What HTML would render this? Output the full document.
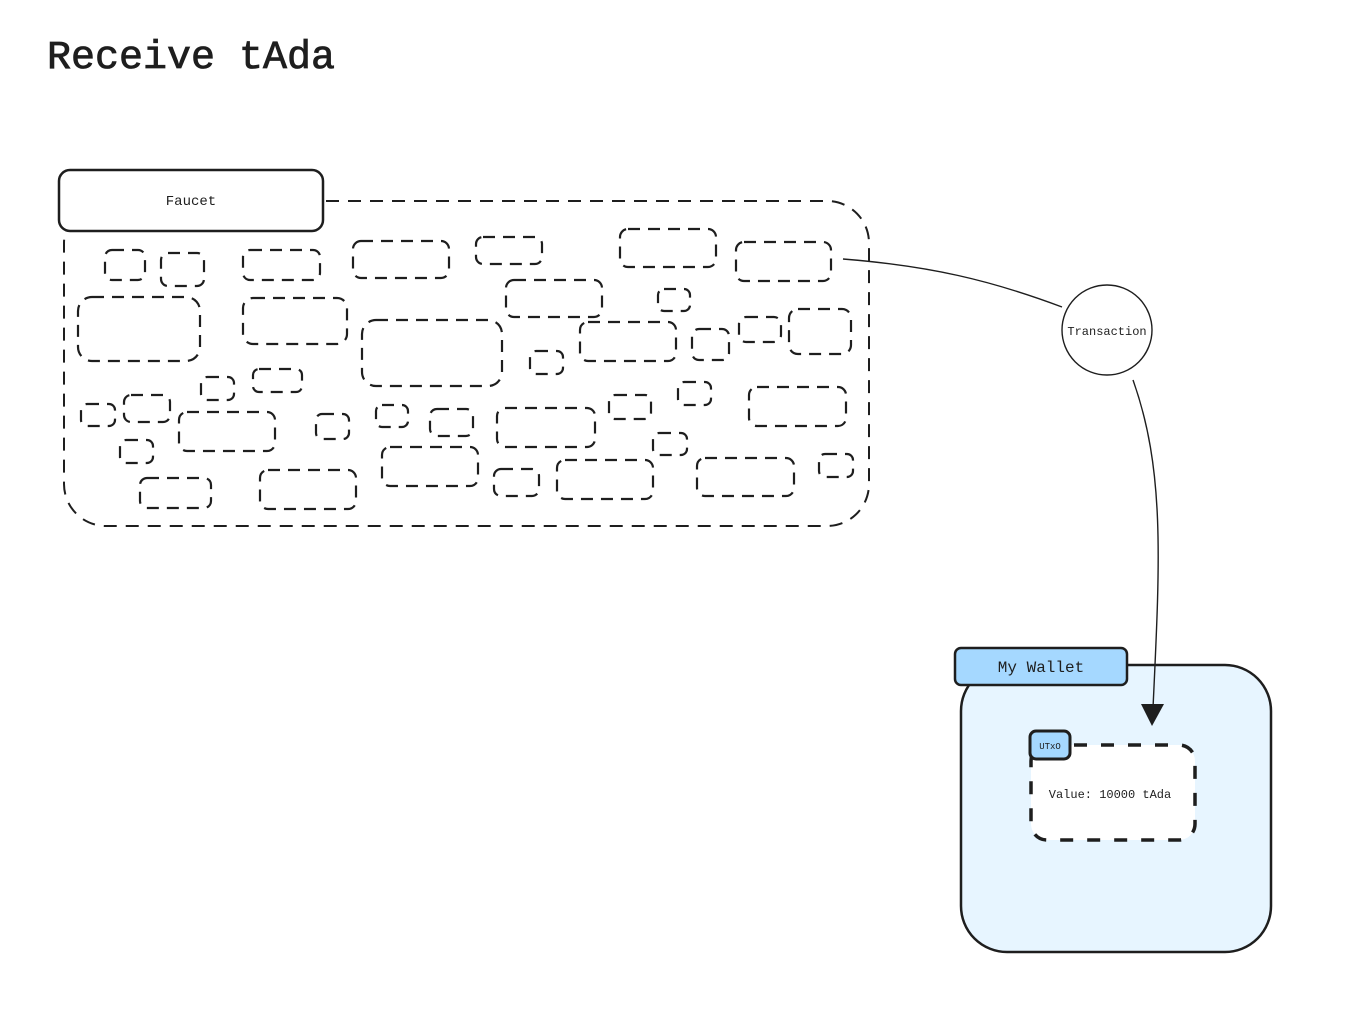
<!DOCTYPE html>
<html><head><meta charset="utf-8"><style>
html,body{margin:0;padding:0;background:#fff;}
svg{display:block;}
text{font-family:"Liberation Mono",monospace;fill:#1e1e1e;}
</style></head><body>
<svg width="1368" height="1022" viewBox="0 0 1368 1022" xmlns="http://www.w3.org/2000/svg">
<text x="47" y="68" font-size="40" stroke="#1e1e1e" stroke-width="0.8">Receive tAda</text>

<rect x="64" y="201" width="805" height="325" rx="42" fill="none" stroke="#1e1e1e" stroke-width="2" stroke-dasharray="13 9"/>
<rect x="59" y="170" width="264" height="61" rx="11" fill="#fff" stroke="#1e1e1e" stroke-width="2.5"/>
<text x="191" y="205" font-size="14" text-anchor="middle" font-family="Liberation Sans">Faucet</text>

<g fill="none" stroke="#1e1e1e" stroke-width="2.2" stroke-dasharray="12 8">
<rect x="105" y="250" width="40" height="30" rx="7"/>
<rect x="161" y="253" width="43" height="33" rx="7"/>
<rect x="243" y="250" width="77" height="30" rx="7"/>
<rect x="353" y="241" width="96" height="37" rx="8"/>
<rect x="476" y="237" width="66" height="27" rx="7"/>
<rect x="620" y="229" width="96" height="38" rx="8"/>
<rect x="736" y="242" width="95" height="39" rx="8"/>
<rect x="78" y="297" width="122" height="64" rx="14"/>
<rect x="243" y="298" width="104" height="46" rx="10"/>
<rect x="362" y="320" width="140" height="66" rx="14"/>
<rect x="506" y="280" width="96" height="37" rx="8"/>
<rect x="658" y="289" width="32" height="22" rx="6"/>
<rect x="580" y="322" width="96" height="39" rx="8"/>
<rect x="530" y="351" width="33" height="23" rx="6"/>
<rect x="692" y="329" width="37" height="31" rx="7"/>
<rect x="739" y="317" width="42" height="25" rx="7"/>
<rect x="789" y="309" width="62" height="45" rx="9"/>
<rect x="201" y="377" width="33" height="23" rx="6"/>
<rect x="253" y="369" width="49" height="23" rx="6"/>
<rect x="81" y="404" width="34" height="22" rx="6"/>
<rect x="124" y="395" width="46" height="27" rx="7"/>
<rect x="179" y="412" width="96" height="39" rx="8"/>
<rect x="120" y="440" width="33" height="23" rx="6"/>
<rect x="316" y="414" width="33" height="25" rx="6"/>
<rect x="376" y="405" width="32" height="22" rx="6"/>
<rect x="430" y="409" width="43" height="27" rx="7"/>
<rect x="497" y="408" width="98" height="39" rx="8"/>
<rect x="609" y="395" width="42" height="24" rx="6"/>
<rect x="678" y="382" width="33" height="23" rx="6"/>
<rect x="749" y="387" width="97" height="39" rx="8"/>
<rect x="653" y="433" width="34" height="22" rx="6"/>
<rect x="140" y="478" width="71" height="30" rx="7"/>
<rect x="260" y="470" width="96" height="39" rx="8"/>
<rect x="382" y="447" width="96" height="39" rx="8"/>
<rect x="494" y="469" width="45" height="27" rx="7"/>
<rect x="557" y="460" width="96" height="39" rx="8"/>
<rect x="697" y="458" width="97" height="38" rx="8"/>
<rect x="819" y="454" width="34" height="23" rx="6"/>
</g>

<path d="M843 259 C 930 266, 990 280, 1062 307" fill="none" stroke="#1e1e1e" stroke-width="1.4"/>
<circle cx="1107" cy="330" r="45" fill="#fff" stroke="#1e1e1e" stroke-width="1.4"/>
<text x="1107" y="335" font-size="12" text-anchor="middle">Transaction</text>

<rect x="961" y="665" width="310" height="287" rx="46" fill="#e7f5ff" stroke="#1e1e1e" stroke-width="2.5"/>
<rect x="955" y="648" width="172" height="37" rx="6" fill="#a5d8ff" stroke="#1e1e1e" stroke-width="2.5"/>
<text x="1041" y="672" font-size="16" text-anchor="middle">My Wallet</text>
<rect x="1031" y="745" width="164" height="95" rx="16" fill="#fff" stroke="#1e1e1e" stroke-width="3.5" stroke-dasharray="13 14"/>
<rect x="1030" y="731" width="40" height="28" rx="6" fill="#a5d8ff" stroke="#1e1e1e" stroke-width="3"/>
<text x="1050" y="749" font-size="9" text-anchor="middle" font-family="Liberation Sans">UTxO</text>
<text x="1110" y="798" font-size="12" text-anchor="middle">Value: 10000 tAda</text>

<path d="M1133 380 C 1165 470, 1160 560, 1153 708" fill="none" stroke="#1e1e1e" stroke-width="1.4"/>
<polygon points="1141,704 1164,704 1152,726" fill="#1e1e1e"/>
</svg>
</body></html>
